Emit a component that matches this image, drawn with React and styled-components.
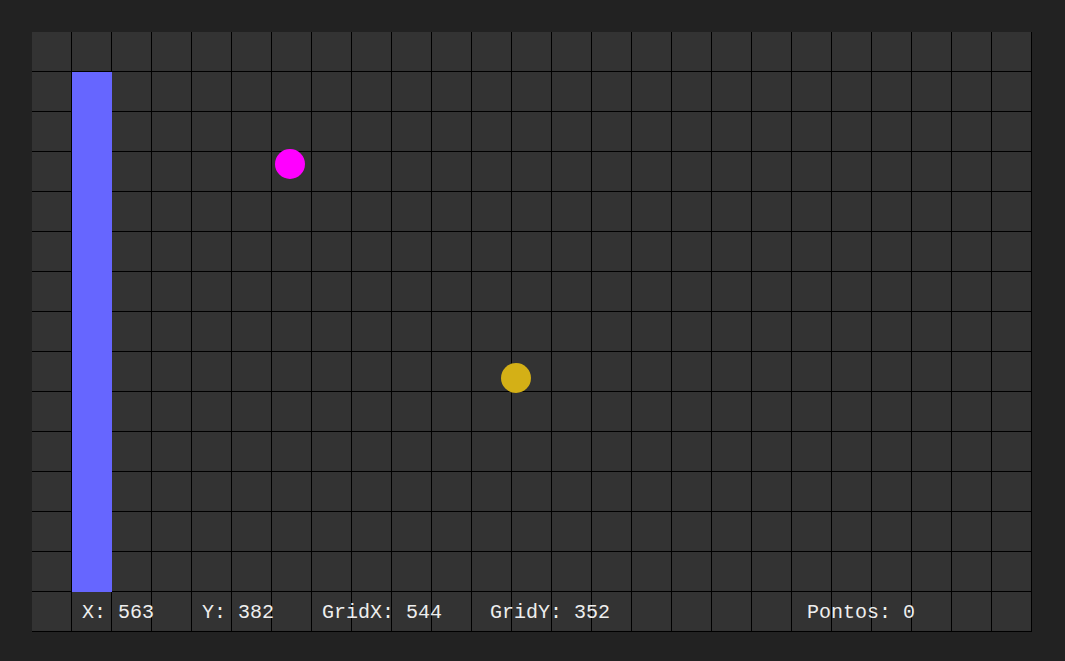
import styled, { createGlobalStyle } from "styled-components";

const GlobalStyle = createGlobalStyle`
  html, body {
    margin: 0;
    background: #222222;
  }
`;

const Page = styled.div`
  width: 1065px;
  height: 661px;
  padding: 32px;
  box-sizing: border-box;
  background: #222222;
`;

const Board = styled.div`
  position: relative;
  width: 1000px;
  height: 600px;
  display: grid;
  grid-template-columns: repeat(25, 40px);
  grid-template-rows: repeat(15, 40px);
`;

const Cell = styled.div`
  background: #333333;
  border-right: 1px solid #000;
  border-bottom: 1px solid #000;
`;

const Paddle = styled.div`
  position: absolute;
  left: 40px;
  top: 40px;
  width: 40px;
  height: 520px;
  background: #6666ff;
`;

const Ball = styled.div`
  position: absolute;
  width: 30px;
  height: 30px;
  border-radius: 50%;
  background: ${(p) => p.$color};
`;

const Status = styled.div`
  position: absolute;
  left: 0;
  bottom: 0;
  height: 40px;
  width: 100%;
  display: flex;
  align-items: center;
  padding-left: 50px;
  box-sizing: border-box;
  font-family: "Liberation Mono", "DejaVu Sans Mono", monospace;
  font-size: 20px;
  color: #eeeeee;
  white-space: pre;
`;

const Stat = styled.span`
  margin-right: ${(p) => p.$gap || 48}px;
`;

const cells = Array.from({ length: 25 * 15 });

export default function App() {
  return (
    <>
      <GlobalStyle />
      <Page>
        <Board>
          {cells.map((_, i) => (
            <Cell key={i} />
          ))}
          <Paddle />
          <Ball $color="#ff00ff" style={{ left: 243, top: 117 }} />
          <Ball $color="#d4b016" style={{ left: 469, top: 331 }} />
          <Status>
            <Stat>X: 563</Stat>
            <Stat>Y: 382</Stat>
            <Stat>GridX: 544</Stat>
            <Stat $gap={197}>GridY: 352</Stat>
            <Stat>Pontos: 0</Stat>
          </Status>
        </Board>
      </Page>
    </>
  );
}
